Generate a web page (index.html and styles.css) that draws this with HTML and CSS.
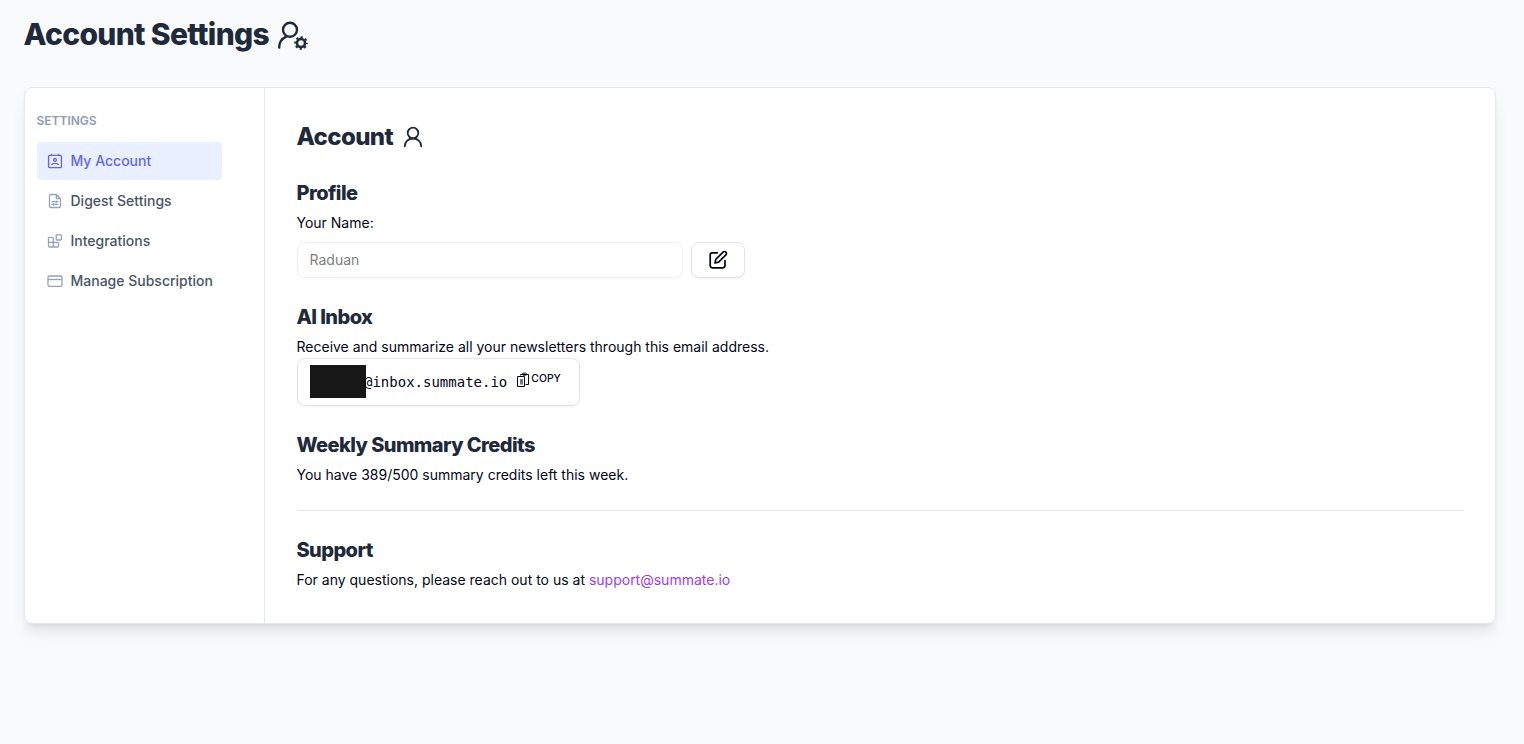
FILE: index.html
```html
<!DOCTYPE html>
<html lang="en">
<head>
<meta charset="utf-8">
<title>Account Settings</title>
<link rel="stylesheet" href="styles.css">
</head>
<body>
<main class="page">
  <h1 class="page-title"><span>Account Settings</span>
    <svg class="title-icon" viewBox="0 0 32 32" fill="none" stroke="currentColor" stroke-width="2.4">
      <circle cx="13" cy="9.8" r="7"/>
      <path d="M2.2 27.6v-.6c0-4.6 3-8.5 7-10.4" stroke-linecap="round"/>
      <circle cx="24" cy="23" r="4" stroke-width="2.5"/>
      <circle cx="24" cy="23" r="5.8" stroke-width="1.9" stroke-dasharray="2.28 2.275" stroke-dashoffset="1.14"/>
    </svg>
  </h1>
  <section class="card">
    <nav class="sidebar">
      <div class="nav-label">SETTINGS</div>
      <ul class="nav">
        <li class="nav-item active">
          <svg class="nav-icon" viewBox="0 0 16 16" fill="none" stroke="currentColor"><rect x="1.6" y="2.4" width="12.8" height="12.2" rx="1.2" stroke-width="1.4"/><path d="M4.5 .8v2M11.5 .8v2M4.5 12c.4-1.3 1.7-1.7 3.5-1.7s3.1.4 3.5 1.7" stroke-width="1.3"/><circle cx="8" cy="6.9" r="1.4" stroke-width="1.3"/></svg>
          <span>My Account</span></li>
        <li class="nav-item">
          <svg class="nav-icon" viewBox="0 0 16 16" fill="none" stroke="currentColor" stroke-width="1.3"><path d="M3.7 1.5h5.6l4.2 4.2v7.6c0 .7-.5 1.2-1.2 1.2H3.7c-.7 0-1.2-.5-1.2-1.2V2.7c0-.7.5-1.2 1.2-1.2zM9.3 1.5v4.2h4.2M4.6 8.6h6.8M4.6 11.4h6.8M9.4 7.4v2.4M6.6 10.2v2.4"/></svg>
          <span>Digest Settings</span></li>
        <li class="nav-item">
          <svg class="nav-icon" viewBox="0 0 16 16" fill="none" stroke="currentColor" stroke-width="1.3"><path d="M6.3 9.4V5.3c0-.6-.3-.9-.9-.9H2.4c-.6 0-.9.3-.9.9v7.8c0 .6.3.9.9.9h8.2c.6 0 .9-.3.9-.9v-2.8c0-.6-.3-.9-.9-.9h-9M6.3 9.4V14"/><rect x="9.2" y="1.8" width="5.2" height="5.2" rx=".8"/></svg>
          <span>Integrations</span></li>
        <li class="nav-item">
          <svg class="nav-icon" viewBox="0 0 16 16" fill="none" stroke="currentColor" stroke-width="1.3"><rect x="1" y="3" width="14" height="10.3" rx="1.3"/><path d="M1 6.5h14"/></svg>
          <span>Manage Subscription</span></li>
      </ul>
    </nav>
    <div class="content">
      <h2 class="content-title"><span>Account</span>
        <svg class="user-icon" viewBox="0 0 24 24" fill="none" stroke="currentColor" stroke-width="1.8" stroke-linecap="round"><circle cx="12" cy="8" r="5.3"/><path d="M3.8 21.3c0-4.6 3.6-7.8 8.2-7.8s8.2 3.2 8.2 7.8"/></svg>
      </h2>
      <section class="block">
        <h3>Profile</h3>
        <p>Your Name:</p>
        <div class="name-row">
          <input class="name-input" value="Raduan" disabled aria-label="Your name">
          <button class="edit" aria-label="Edit"><svg viewBox="0 0 20 20" fill="none" stroke="currentColor" stroke-width="1.7" stroke-linecap="round" stroke-linejoin="round"><path d="M9.3 2.8H4C2.7 2.8 2.2 3.7 2.2 5v10.6c0 1.3.9 2.2 2.2 2.2h10.4c1.3 0 2.2-.9 2.2-2.2v-5.1"/><path d="M7 13l.8-3.6 7.3-7.3a1.9 1.9 0 0 1 2.8 2.8l-7.3 7.3z"/></svg></button>
        </div>
      </section>
      <section class="block">
        <h3>AI Inbox</h3>
        <p>Receive and summarize all your newsletters through this email address.</p>
        <div class="inbox">
          <span class="redacted"></span><code>@inbox.summate.io</code>
          <button class="copy"><svg viewBox="0 0 14 16" fill="none" stroke="currentColor" stroke-width="1"><path d="M4.5 3.5v-1h8v10h-3M1.5 4.5h7v10h-7z"/><rect x="6.5" y="1.2" width="4" height="2" rx=".8"/><path d="M4 7h3v5.5H4z" fill="currentColor" stroke="none" opacity=".55"/></svg><span>COPY</span></button>
        </div>
      </section>
      <section class="block">
        <h3>Weekly Summary Credits</h3>
        <p>You have 389/500 summary credits left this week.</p>
      </section>
      <hr>
      <section class="support">
        <h3>Support</h3>
        <p>For any questions, please reach out to us at <a href="mailto:support@summate.io">support@summate.io</a></p>
      </section>
    </div>
  </section>
</main>
</body>
</html>
```
FILE: styles.css
```css
* { box-sizing: border-box; }
html { background: #f8fafc; }
body { margin: 0; min-height: 100vh; background: #f8fafc; color: #020617; font: 14px/22px Inter, sans-serif; font-optical-sizing: none; }
h1, h2, h3, p, ul { margin: 0; padding: 0; }
h1, h2, h3 { color: #1e293b; font-weight: 800; }
ul { list-style: none; }
button { font-family: inherit; color: inherit; }
svg { display: block; flex: none; }
.page { min-height: 744px; padding: 14px 28px 0 24px; }
.page-title { display: flex; align-items: center; gap: 8px; height: 41px; margin-left: -.5px; font-size: 30px; line-height: 41px; letter-spacing: -.65px; }
.title-icon { width: 32px; height: 32px; margin-top: 2px; }
.card { display: flex; margin-top: 32px; height: 537px; border: 1px solid #e2e8f0; border-radius: 8px; background: #fff; box-shadow: 0 10px 15px -3px rgba(0,0,0,.1), 0 4px 6px -4px rgba(0,0,0,.1); }
.sidebar { width: 240px; padding: 24px 42px 0 12px; border-right: 1px solid #e2e8f0; }
.nav-label { height: 18px; margin: 0 0 12px -.5px; font-size: 12px; line-height: 18px; font-weight: 600; color: #8c9db5; }
.nav { display: grid; gap: 2px; }
.nav-item { display: flex; align-items: center; gap: 7.5px; width: 185px; height: 38px; padding-left: 10px; border-radius: 4px; color: #475569; font-weight: 500; white-space: nowrap; }
.nav-icon { width: 16px; height: 16px; color: #94a3b8; }
.active, .active .nav-icon { color: #6366f1; }
.active { background: #eaf0ff; }
.content { flex: 1; padding: 33px 31px 32px 31.5px; }
.content-title { display: flex; align-items: center; gap: 8px; height: 32px; margin-bottom: 26px; font-size: 24px; line-height: 32px; letter-spacing: -.6px; }
.user-icon { width: 24px; height: 24px; }
.block { margin-bottom: 25px; }
h3 { height: 28px; margin-bottom: 5px; font-size: 20px; line-height: 28px; letter-spacing: -.58px; }
.name-row { display: flex; gap: 8px; margin: 8px 0 0 .5px; height: 36px; }
.name-input { width: 386px; padding: 0 11.5px; border: 1px solid #f1f1f3; border-radius: 8px; background: #fff; color: #808084; font: inherit; box-shadow: 0 1px 2px rgba(0,0,0,.03); }
.edit { display: grid; place-items: center; width: 54px; border: 1px solid #e4e4e7; border-radius: 8px; background: #fff; box-shadow: 0 1px 2px rgba(0,0,0,.05); }
.edit svg { width: 20px; height: 20px; }
.inbox { display: flex; align-items: center; width: 283px; height: 48px; margin-left: .5px; padding: 0 12px; border: 1px solid #e4e4e7; border-radius: 8px; box-shadow: 0 1px 2px rgba(0,0,0,.05); }
.redacted { width: 56px; height: 33px; margin-right: -2px; margin-top: -1px; background: #171717; }
code { font: 14px/22px "DejaVu Sans Mono", monospace; }
.copy { display: flex; align-items: center; gap: 1px; margin: -8px 0 0 9px; padding: 0; border: 0; background: none; font-size: 10.4px; font-weight: 500; }
.copy svg { width: 14px; height: 16px; margin-top: 3px; }
hr { height: 1px; margin: -1px 0 25px; border: 0; background: #e4e4ec; }
a { color: #9b3df0; text-decoration: none; }
```
